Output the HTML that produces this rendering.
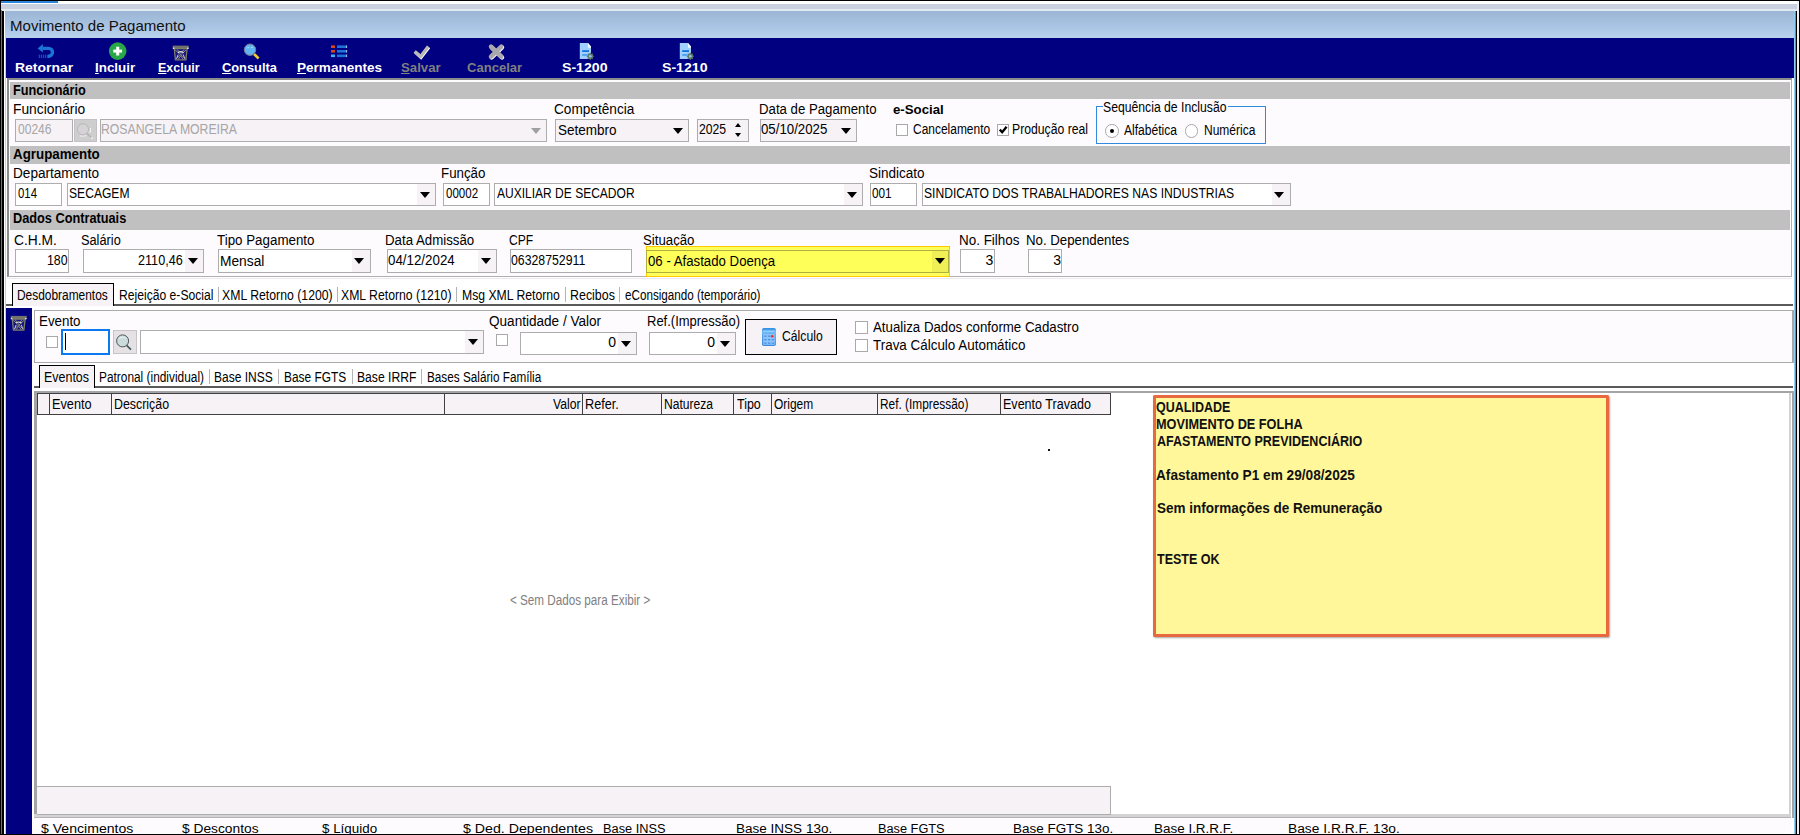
<!DOCTYPE html>
<html lang="pt-BR"><head><meta charset="utf-8"><title>Movimento de Pagamento</title>
<style>
html,body{margin:0;padding:0;background:#fff;}
#w{position:relative;width:1800px;height:835px;overflow:hidden;font-family:"Liberation Sans",sans-serif;color:#000;}
#w div,#w span,#w svg{position:absolute;}
.t{line-height:1;white-space:pre;transform-origin:0 0;}
.t u{text-decoration:underline;text-underline-offset:1px;text-decoration-thickness:1px;}
</style></head><body><div id="w">
<div style="left:0px;top:0px;width:1800px;height:835px;background:#fff;"></div>
<div style="left:0px;top:1px;width:1800px;height:3px;background:#fff;"></div>
<div style="left:1px;top:1px;width:57px;height:2.4px;background:#2b86dc;"></div>
<div style="left:0px;top:4px;width:1800px;height:5px;background:#c9d1e1;"></div>
<div style="left:0px;top:9px;width:1800px;height:2px;background:#e3e9f1;"></div>
<div style="left:0px;top:0px;width:1800px;height:1px;background:#000;"></div>
<div style="left:4px;top:11px;width:1792px;height:27px;background:linear-gradient(#9cb5d4,#a8c3e3 55%,#b9d3ed);"></div>
<span class="t" style="left:9.80px;top:19px;font-size:14.2px;transform:scaleX(1.0605);color:#111;">Movimento de Pagamento</span>
<div style="left:6px;top:38px;width:1787.5px;height:40px;background:#000080;"></div>
<div style="left:0px;top:0px;width:1px;height:835px;background:#000;"></div>
<div style="left:1px;top:10px;width:1.3px;height:825px;background:#707070;"></div>
<div style="left:2.3px;top:11px;width:1.7px;height:824px;background:#000;"></div>
<div style="left:4px;top:11px;width:1.2px;height:824px;background:#fff;"></div>
<div style="left:5.2px;top:38px;width:1.2px;height:797px;background:#b8d0f0;"></div>
<div style="left:1793.5px;top:11px;width:2.5px;height:824px;background:linear-gradient(90deg,#c8e0f8,#38b4ee 60%,#1890d0);"></div>
<div style="left:1796px;top:11px;width:1.2px;height:824px;background:#000;"></div>
<div style="left:1797.2px;top:1px;width:1.8px;height:834px;background:#f0f0f4;"></div>
<div style="left:1799px;top:0px;width:1px;height:835px;background:#000;"></div>
<span class="t" style="left:14.69px;top:62px;font-size:12px;transform:scaleX(1.1634);font-weight:bold;color:#fff;">Retornar</span>
<span class="t" style="left:94.73px;top:62px;font-size:12px;transform:scaleX(1.1137);font-weight:bold;color:#fff;"><u>I</u>ncluir</span>
<span class="t" style="left:157.79px;top:62px;font-size:12px;transform:scaleX(1.0403);font-weight:bold;color:#fff;"><u>E</u>xcluir</span>
<span class="t" style="left:221.69px;top:62px;font-size:12px;transform:scaleX(1.0699);font-weight:bold;color:#fff;"><u>C</u>onsulta</span>
<span class="t" style="left:297.02px;top:62px;font-size:12px;transform:scaleX(1.1290);font-weight:bold;color:#fff;"><u>P</u>ermanentes</span>
<span class="t" style="left:400.70px;top:62px;font-size:12px;transform:scaleX(1.0987);font-weight:bold;color:#808080;"><u>S</u>alvar</span>
<span class="t" style="left:467.28px;top:62px;font-size:12px;transform:scaleX(1.0871);font-weight:bold;color:#808080;">Cancelar</span>
<span class="t" style="left:562.18px;top:62px;font-size:12px;transform:scaleX(1.1754);font-weight:bold;color:#fff;">S-1200</span>
<span class="t" style="left:662.18px;top:62px;font-size:12px;transform:scaleX(1.1754);font-weight:bold;color:#fff;">S-1210</span>
<div style="left:6.7px;top:78px;width:1784.9px;height:199.4px;background:#fefbfe;border-style:solid;border-color:#8c8c8c #b2aeb2 #b2aeb2 #8c8c8c;border-width:2px 1px 1px 2px;box-sizing:border-box;"></div>
<div style="left:7px;top:277.6px;width:1784.6px;height:1px;background:#ece9ec;"></div>
<div style="left:10px;top:82.2px;width:1780.4px;height:17px;background:#c0c0c0;"></div>
<div style="left:10px;top:146.1px;width:1780.4px;height:17.6px;background:#c0c0c0;"></div>
<div style="left:10px;top:210.1px;width:1780.4px;height:19.6px;background:#c0c0c0;"></div>
<span class="t" style="left:12.77px;top:83px;font-size:14px;transform:scaleX(0.9083);font-weight:bold;">Funcionário</span>
<span class="t" style="left:13.27px;top:147px;font-size:14px;transform:scaleX(0.9535);font-weight:bold;">Agrupamento</span>
<span class="t" style="left:12.77px;top:211px;font-size:14px;transform:scaleX(0.9098);font-weight:bold;">Dados Contratuais</span>
<span class="t" style="left:13.40px;top:102px;font-size:14px;transform:scaleX(0.9864);">Funcionário</span>
<span class="t" style="left:554.12px;top:102px;font-size:14px;transform:scaleX(0.9737);">Competência</span>
<span class="t" style="left:758.54px;top:102px;font-size:14px;transform:scaleX(0.9434);">Data de Pagamento</span>
<span class="t" style="left:893.07px;top:103px;font-size:13.5px;transform:scaleX(0.9808);font-weight:bold;">e-Social</span>
<span class="t" style="left:13.41px;top:166px;font-size:14px;transform:scaleX(0.9712);">Departamento</span>
<span class="t" style="left:441.13px;top:166px;font-size:14px;transform:scaleX(0.9509);">Função</span>
<span class="t" style="left:868.89px;top:166px;font-size:14px;transform:scaleX(0.9660);">Sindicato</span>
<span class="t" style="left:13.81px;top:233px;font-size:14px;transform:scaleX(0.9836);">C.H.M.</span>
<span class="t" style="left:81.33px;top:233px;font-size:14px;transform:scaleX(0.9115);">Salário</span>
<span class="t" style="left:217.03px;top:233px;font-size:14px;transform:scaleX(0.9540);">Tipo Pagamento</span>
<span class="t" style="left:384.84px;top:233px;font-size:14px;transform:scaleX(0.9473);">Data Admissão</span>
<span class="t" style="left:509.00px;top:233px;font-size:14px;transform:scaleX(0.8639);">CPF</span>
<span class="t" style="left:643.01px;top:233px;font-size:14px;transform:scaleX(0.9442);">Situação</span>
<span class="t" style="left:958.53px;top:233px;font-size:14px;transform:scaleX(0.9594);">No. Filhos</span>
<span class="t" style="left:1026.14px;top:233px;font-size:14px;transform:scaleX(0.9462);">No. Dependentes</span>
<div style="left:15px;top:119px;width:57.5px;height:23px;background:#f6f2f6;border:1px solid #adadad;box-sizing:border-box;"></div>
<span class="t" style="left:17.52px;top:122px;font-size:14px;transform:scaleX(0.8598);color:#a6a6a6;">00246</span>
<div style="left:74.2px;top:119px;width:22.8px;height:22.8px;background:#cecece;border:1px solid #c2c0c2;box-sizing:border-box;"></div>
<div style="left:99.5px;top:119px;width:447.5px;height:23px;background:#f6f2f6;border:1px solid #adadad;box-sizing:border-box;"></div>
<div style="left:531px;top:127.8px;width:0;height:0;border-left:5.5px solid transparent;border-right:5.5px solid transparent;border-top:6px solid #a0a0a0;"></div>
<span class="t" style="left:101.02px;top:122px;font-size:14px;transform:scaleX(0.8742);color:#a6a6a6;">ROSANGELA MOREIRA</span>
<div style="left:555px;top:119px;width:134px;height:23px;background:#f6f2f6;border:1px solid #adadad;box-sizing:border-box;"></div>
<div style="left:672.9px;top:127.8px;width:0;height:0;border-left:5.5px solid transparent;border-right:5.5px solid transparent;border-top:6px solid #000;"></div>
<span class="t" style="left:558.19px;top:123px;font-size:14px;transform:scaleX(0.9649);">Setembro</span>
<div style="left:697px;top:119px;width:52px;height:23px;background:#f6f2f6;border:1px solid #adadad;box-sizing:border-box;"></div>
<span class="t" style="left:699.39px;top:122px;font-size:14px;transform:scaleX(0.8711);">2025</span>
<div style="left:734.5px;top:123.2px;width:0;height:0;border-left:3.5px solid transparent;border-right:3.5px solid transparent;border-bottom:4px solid #000;"></div>
<div style="left:734.5px;top:132.6px;width:0;height:0;border-left:3.5px solid transparent;border-right:3.5px solid transparent;border-top:4px solid #000;"></div>
<div style="left:760px;top:119px;width:97px;height:23px;background:#f6f2f6;border:1px solid #adadad;box-sizing:border-box;"></div>
<div style="left:840.5px;top:127.8px;width:0;height:0;border-left:5.5px solid transparent;border-right:5.5px solid transparent;border-top:6px solid #000;"></div>
<span class="t" style="left:761.17px;top:122px;font-size:14px;transform:scaleX(0.9471);">05/10/2025</span>
<div style="left:896px;top:123.6px;width:12.2px;height:12px;background:#fff;border:1px solid #a9a9a9;box-sizing:border-box;"></div>
<div style="left:997px;top:123.6px;width:12.4px;height:12px;background:#fff;border:1px solid #a9a9a9;box-sizing:border-box;"></div>
<svg style="left:997px;top:123.6px" width="12.399999999999977" height="12.0" viewBox="0 0 12 12"><path d="M2.6 5.6 L5 8.2 L9.4 2.8" fill="none" stroke="#000" stroke-width="2.3"/></svg>
<span class="t" style="left:913.00px;top:122px;font-size:14px;transform:scaleX(0.8542);">Cancelamento</span>
<span class="t" style="left:1012.42px;top:122px;font-size:14px;transform:scaleX(0.8729);">Produção real</span>
<div style="left:1096px;top:106.4px;width:170px;height:37.8px;border:1.4px solid #3289de;box-sizing:border-box;"></div>
<div style="left:1103.4px;top:104px;width:124.2px;height:5px;background:#fefbfe;"></div>
<span class="t" style="left:1103.05px;top:100px;font-size:14px;transform:scaleX(0.8719);">Sequência de Inclusão</span>
<div style="left:1105.1px;top:124.4px;width:13.6px;height:13.6px;background:#fff;border:1px solid #a8a8a8;border-radius:50%;box-sizing:border-box;"></div>
<div style="left:1109.7px;top:129px;width:4.4px;height:4.4px;background:#000;border-radius:50%;"></div>
<div style="left:1184.9px;top:124.4px;width:13.6px;height:13.6px;background:#fff;border:1px solid #a8a8a8;border-radius:50%;box-sizing:border-box;"></div>
<span class="t" style="left:1124.00px;top:123px;font-size:14px;transform:scaleX(0.8623);">Alfabética</span>
<span class="t" style="left:1203.64px;top:123px;font-size:14px;transform:scaleX(0.8571);">Numérica</span>
<div style="left:15px;top:183px;width:47px;height:23.4px;background:#fff;border:1px solid #adadad;box-sizing:border-box;"></div>
<span class="t" style="left:17.54px;top:186px;font-size:14px;transform:scaleX(0.8128);">014</span>
<div style="left:67px;top:183px;width:368.5px;height:23.4px;background:#fff;border:1px solid #adadad;box-sizing:border-box;"></div>
<div style="left:416.5px;top:184px;width:18px;height:21.4px;background:#f6f2f6;"></div>
<div style="left:419.5px;top:192px;width:0;height:0;border-left:5.5px solid transparent;border-right:5.5px solid transparent;border-top:6px solid #000;"></div>
<span class="t" style="left:68.96px;top:186px;font-size:14px;transform:scaleX(0.8645);">SECAGEM</span>
<div style="left:443px;top:183px;width:47px;height:23.4px;background:#fff;border:1px solid #adadad;box-sizing:border-box;"></div>
<span class="t" style="left:445.54px;top:186px;font-size:14px;transform:scaleX(0.8240);">00002</span>
<div style="left:494px;top:183px;width:369px;height:23.4px;background:#fff;border:1px solid #adadad;box-sizing:border-box;"></div>
<div style="left:844px;top:184px;width:18px;height:21.4px;background:#f6f2f6;"></div>
<div style="left:847.2px;top:192px;width:0;height:0;border-left:5.5px solid transparent;border-right:5.5px solid transparent;border-top:6px solid #000;"></div>
<span class="t" style="left:497.00px;top:186px;font-size:14px;transform:scaleX(0.8584);">AUXILIAR DE SECADOR</span>
<div style="left:870.3px;top:183px;width:46.7px;height:23.4px;background:#fff;border:1px solid #adadad;box-sizing:border-box;"></div>
<span class="t" style="left:872.03px;top:186px;font-size:14px;transform:scaleX(0.8420);">001</span>
<div style="left:922px;top:183px;width:369px;height:23.4px;background:#fff;border:1px solid #adadad;box-sizing:border-box;"></div>
<div style="left:1272px;top:184px;width:18px;height:21.4px;background:#f6f2f6;"></div>
<div style="left:1274.3px;top:192px;width:0;height:0;border-left:5.5px solid transparent;border-right:5.5px solid transparent;border-top:6px solid #000;"></div>
<span class="t" style="left:923.95px;top:186px;font-size:14px;transform:scaleX(0.8666);">SINDICATO DOS TRABALHADORES NAS INDUSTRIAS</span>
<div style="left:15px;top:249px;width:54px;height:24px;background:#fff;border:1px solid #adadad;box-sizing:border-box;"></div>
<span class="t" style="left:46.87px;top:253px;font-size:14px;transform:scaleX(0.8819);">180</span>
<div style="left:83px;top:249px;width:121px;height:24px;background:#fff;border:1px solid #adadad;box-sizing:border-box;"></div>
<div style="left:185px;top:250px;width:18px;height:22px;background:#f6f2f6;"></div>
<div style="left:188.3px;top:258.3px;width:0;height:0;border-left:5.5px solid transparent;border-right:5.5px solid transparent;border-top:6px solid #000;"></div>
<span class="t" style="left:137.97px;top:253px;font-size:14px;transform:scaleX(0.9027);">2110,46</span>
<div style="left:218px;top:249px;width:153px;height:24px;background:#fff;border:1px solid #adadad;box-sizing:border-box;"></div>
<div style="left:352px;top:250px;width:18px;height:22px;background:#f6f2f6;"></div>
<div style="left:354.2px;top:258.3px;width:0;height:0;border-left:5.5px solid transparent;border-right:5.5px solid transparent;border-top:6px solid #000;"></div>
<span class="t" style="left:220.40px;top:254px;font-size:14px;transform:scaleX(0.9826);">Mensal</span>
<div style="left:386.6px;top:249px;width:110.4px;height:24px;background:#fff;border:1px solid #adadad;box-sizing:border-box;"></div>
<div style="left:478px;top:250px;width:18px;height:22px;background:#f6f2f6;"></div>
<div style="left:480.5px;top:258.3px;width:0;height:0;border-left:5.5px solid transparent;border-right:5.5px solid transparent;border-top:6px solid #000;"></div>
<span class="t" style="left:388.27px;top:253px;font-size:14px;transform:scaleX(0.9526);">04/12/2024</span>
<div style="left:510.4px;top:249px;width:121.6px;height:24px;background:#fff;border:1px solid #adadad;box-sizing:border-box;"></div>
<span class="t" style="left:511.31px;top:253px;font-size:14px;transform:scaleX(0.8773);">06328752911</span>
<div style="left:646.2px;top:246px;width:304.1px;height:30.6px;background:#ffff5a;border:solid #ffc800;border-width:1.8px 1.6px 1.8px 1px;box-sizing:border-box;"></div>
<div style="left:645.6px;top:249.5px;width:303px;height:23.4px;border:1px solid #b0b040;box-sizing:border-box;"></div>
<div style="left:932.4px;top:250.5px;width:15.2px;height:21.4px;background:#f0f056;"></div>
<div style="left:934.8px;top:258.2px;width:0;height:0;border-left:5.5px solid transparent;border-right:5.5px solid transparent;border-top:6px solid #000;"></div>
<span class="t" style="left:648.07px;top:254px;font-size:14px;transform:scaleX(0.9445);">06 - Afastado Doença</span>
<div style="left:960px;top:249px;width:35px;height:24px;background:#fff;border:1px solid #adadad;box-sizing:border-box;"></div>
<span class="t" style="left:985.44px;top:253px;font-size:14px;transform:scaleX(1.0000);">3</span>
<div style="left:1027.6px;top:249px;width:34.9px;height:24px;background:#fff;border:1px solid #adadad;box-sizing:border-box;"></div>
<span class="t" style="left:1053.24px;top:253px;font-size:14px;transform:scaleX(1.0000);">3</span>
<div style="left:6.4px;top:304.2px;width:1787.1px;height:1.8px;background:#5a5a5a;"></div>
<div style="left:12px;top:283px;width:102.2px;height:23.2px;background:#f6f2f6;border:1px solid #000;border-bottom:none;box-sizing:border-box;"></div>
<span class="t" style="left:17.05px;top:288px;font-size:14px;transform:scaleX(0.8514);">Desdobramentos</span>
<span class="t" style="left:118.53px;top:288px;font-size:14px;transform:scaleX(0.8672);">Rejeição e-Social</span>
<span class="t" style="left:222.29px;top:288px;font-size:14px;transform:scaleX(0.8762);">XML Retorno (1200)</span>
<span class="t" style="left:341.49px;top:288px;font-size:14px;transform:scaleX(0.8746);">XML Retorno (1210)</span>
<span class="t" style="left:461.62px;top:288px;font-size:14px;transform:scaleX(0.8716);">Msg XML Retorno</span>
<span class="t" style="left:569.51px;top:288px;font-size:14px;transform:scaleX(0.8878);">Recibos</span>
<span class="t" style="left:625.23px;top:288px;font-size:14px;transform:scaleX(0.8331);">eConsigando (temporário)</span>
<div style="left:217.9px;top:287px;width:1px;height:15px;background:#b4b4b4;"></div>
<div style="left:337.1px;top:287px;width:1px;height:15px;background:#b4b4b4;"></div>
<div style="left:456.2px;top:287px;width:1px;height:15px;background:#b4b4b4;"></div>
<div style="left:564.5px;top:287px;width:1px;height:15px;background:#b4b4b4;"></div>
<div style="left:619.3px;top:287px;width:1px;height:15px;background:#b4b4b4;"></div>
<div style="left:6.4px;top:308px;width:25.6px;height:526px;background:#000080;"></div>
<div style="left:34.4px;top:310px;width:1759.2px;height:53px;background:#fefbfe;border:1px solid #aaa;border-right:2.5px solid #a8a8ac;box-sizing:border-box;"></div>
<span class="t" style="left:39.23px;top:314px;font-size:14px;transform:scaleX(0.9532);">Evento</span>
<span class="t" style="left:488.99px;top:314px;font-size:14px;transform:scaleX(0.9686);">Quantidade / Valor</span>
<span class="t" style="left:646.96px;top:314px;font-size:14px;transform:scaleX(0.9273);">Ref.(Impressão)</span>
<div style="left:45.6px;top:336px;width:12.6px;height:12.4px;background:#fff;border:1px solid #a9a9a9;box-sizing:border-box;"></div>
<div style="left:61.1px;top:329.1px;width:48.7px;height:25.8px;background:#fff;border:2.2px solid #0b7af2;box-sizing:border-box;"></div>
<div style="left:65px;top:332.8px;width:1px;height:16.8px;background:#000;"></div>
<div style="left:113px;top:330.2px;width:23.7px;height:23.6px;background:#e5e1e5;border:1px solid #c6c4c6;box-sizing:border-box;"></div>
<div style="left:140px;top:330.4px;width:344px;height:23.4px;background:#fff;border:1px solid #adadad;box-sizing:border-box;"></div>
<div style="left:465px;top:331.4px;width:18px;height:21.4px;background:#f6f2f6;"></div>
<div style="left:468.4px;top:339.4px;width:0;height:0;border-left:5.5px solid transparent;border-right:5.5px solid transparent;border-top:6px solid #000;"></div>
<div style="left:495.7px;top:334.2px;width:12.3px;height:11.8px;background:#fff;border:1px solid #a9a9a9;box-sizing:border-box;"></div>
<div style="left:519.5px;top:332px;width:117.5px;height:22.6px;background:#fff;border:1px solid #adadad;box-sizing:border-box;"></div>
<div style="left:618px;top:333px;width:18px;height:20.6px;background:#f6f2f6;"></div>
<div style="left:621.3px;top:340.6px;width:0;height:0;border-left:5.5px solid transparent;border-right:5.5px solid transparent;border-top:6px solid #000;"></div>
<span class="t" style="left:608.24px;top:335px;font-size:14px;transform:scaleX(1.0000);">0</span>
<div style="left:648.6px;top:332px;width:87.2px;height:22.6px;background:#fff;border:1px solid #adadad;box-sizing:border-box;"></div>
<div style="left:716.8px;top:333px;width:18px;height:20.6px;background:#f6f2f6;"></div>
<div style="left:720.1px;top:340.6px;width:0;height:0;border-left:5.5px solid transparent;border-right:5.5px solid transparent;border-top:6px solid #000;"></div>
<span class="t" style="left:707.24px;top:335px;font-size:14px;transform:scaleX(1.0000);">0</span>
<div style="left:745.4px;top:319.3px;width:91.2px;height:35.9px;background:#f6f2f6;border:1px solid #000;box-sizing:border-box;"></div>
<span class="t" style="left:781.79px;top:329px;font-size:14px;transform:scaleX(0.8720);">Cálculo</span>
<div style="left:855.4px;top:321.3px;width:12.6px;height:12.5px;background:#fff;border:1px solid #a9a9a9;box-sizing:border-box;"></div>
<div style="left:855.4px;top:339.4px;width:12.6px;height:12.5px;background:#fff;border:1px solid #a9a9a9;box-sizing:border-box;"></div>
<span class="t" style="left:872.70px;top:320px;font-size:14px;transform:scaleX(0.9478);">Atualiza Dados conforme Cadastro</span>
<span class="t" style="left:873.13px;top:338px;font-size:14px;transform:scaleX(0.9587);">Trava Cálculo Automático</span>
<div style="left:33.6px;top:386.4px;width:1759.9px;height:1.6px;background:#5a5a5a;"></div>
<div style="left:39.4px;top:365.4px;width:55.9px;height:22.6px;background:#f6f2f6;border:1px solid #000;border-bottom:none;box-sizing:border-box;"></div>
<span class="t" style="left:44.00px;top:370px;font-size:14px;transform:scaleX(0.8898);">Eventos</span>
<span class="t" style="left:99.25px;top:370px;font-size:14px;transform:scaleX(0.8486);">Patronal (individual)</span>
<span class="t" style="left:213.84px;top:370px;font-size:14px;transform:scaleX(0.8574);">Base INSS</span>
<span class="t" style="left:283.85px;top:370px;font-size:14px;transform:scaleX(0.8510);">Base FGTS</span>
<span class="t" style="left:356.63px;top:370px;font-size:14px;transform:scaleX(0.8685);">Base IRRF</span>
<span class="t" style="left:426.76px;top:370px;font-size:14px;transform:scaleX(0.8391);">Bases Salário Família</span>
<div style="left:208.9px;top:369px;width:1px;height:15px;background:#b4b4b4;"></div>
<div style="left:278.3px;top:369px;width:1px;height:15px;background:#b4b4b4;"></div>
<div style="left:351.7px;top:369px;width:1px;height:15px;background:#b4b4b4;"></div>
<div style="left:421.3px;top:369px;width:1px;height:15px;background:#b4b4b4;"></div>
<div style="left:34.4px;top:391.1px;width:1759.2px;height:426.9px;background:#fff;border:solid #a4a4a8;border-width:2px 2.2px 0 3px;box-sizing:border-box;"></div>
<div style="left:1789.2px;top:393px;width:2.2px;height:423px;background:#d2d2d2;"></div>
<div style="left:34.4px;top:814px;width:1757px;height:2.6px;background:#d4d4d4;"></div>
<div style="left:34.4px;top:816.6px;width:1757px;height:1.2px;background:#b4b4b4;"></div>
<div style="left:37.2px;top:393px;width:1074px;height:22px;background:#f6f2f6;border:1.4px solid #404040;box-sizing:border-box;"></div>
<div style="left:48.8px;top:393.4px;width:1.4px;height:21.2px;background:#404040;"></div>
<div style="left:110.5px;top:393.4px;width:1.4px;height:21.2px;background:#404040;"></div>
<div style="left:443.8px;top:393.4px;width:1.4px;height:21.2px;background:#404040;"></div>
<div style="left:581.6px;top:393.4px;width:1.4px;height:21.2px;background:#404040;"></div>
<div style="left:660.8px;top:393.4px;width:1.4px;height:21.2px;background:#404040;"></div>
<div style="left:733px;top:393.4px;width:1.4px;height:21.2px;background:#404040;"></div>
<div style="left:771px;top:393.4px;width:1.4px;height:21.2px;background:#404040;"></div>
<div style="left:876.5px;top:393.4px;width:1.4px;height:21.2px;background:#404040;"></div>
<div style="left:999.5px;top:393.4px;width:1.4px;height:21.2px;background:#404040;"></div>
<span class="t" style="left:51.88px;top:397px;font-size:14px;transform:scaleX(0.9102);">Evento</span>
<span class="t" style="left:114.01px;top:397px;font-size:14px;transform:scaleX(0.8852);">Descrição</span>
<span class="t" style="left:552.94px;top:397px;font-size:14px;transform:scaleX(0.8725);">Valor</span>
<span class="t" style="left:584.99px;top:397px;font-size:14px;transform:scaleX(0.9047);">Refer.</span>
<span class="t" style="left:663.93px;top:397px;font-size:14px;transform:scaleX(0.8643);">Natureza</span>
<span class="t" style="left:737.25px;top:397px;font-size:14px;transform:scaleX(0.8904);">Tipo</span>
<span class="t" style="left:774.06px;top:397px;font-size:14px;transform:scaleX(0.8522);">Origem</span>
<span class="t" style="left:879.85px;top:397px;font-size:14px;transform:scaleX(0.8478);">Ref. (Impressão)</span>
<span class="t" style="left:1002.60px;top:397px;font-size:14px;transform:scaleX(0.8964);">Evento Travado</span>
<span class="t" style="left:510.32px;top:593px;font-size:14px;transform:scaleX(0.8346);color:#808080;">&lt; Sem Dados para Exibir &gt;</span>
<div style="left:1048px;top:449px;width:2px;height:2px;background:#111;"></div>
<div style="left:37.4px;top:786px;width:1073.6px;height:29px;background:#f6f2f6;border:solid #adadad;border-width:1.2px 1.2px 1.8px 0;box-sizing:border-box;"></div>
<div style="left:32px;top:818px;width:1759.4px;height:16px;background:#fefbfe;"></div>
<span class="t" style="left:41.36px;top:822px;font-size:13.7px;transform:scaleX(1.0285);">$ Vencimentos</span>
<span class="t" style="left:182.36px;top:822px;font-size:13.7px;transform:scaleX(1.0059);">$ Descontos</span>
<span class="t" style="left:322.37px;top:822px;font-size:13.7px;transform:scaleX(0.9786);">$ Líquido</span>
<span class="t" style="left:462.86px;top:822px;font-size:13.7px;transform:scaleX(1.0353);">$ Ded. Dependentes</span>
<span class="t" style="left:602.98px;top:822px;font-size:13.7px;transform:scaleX(0.9344);">Base INSS</span>
<span class="t" style="left:736.42px;top:822px;font-size:13.7px;transform:scaleX(0.9880);">Base INSS 13o.</span>
<span class="t" style="left:877.98px;top:822px;font-size:13.7px;transform:scaleX(0.9312);">Base FGTS</span>
<span class="t" style="left:1012.92px;top:822px;font-size:13.7px;transform:scaleX(0.9833);">Base FGTS 13o.</span>
<span class="t" style="left:1153.92px;top:822px;font-size:13.7px;transform:scaleX(0.9826);">Base I.R.R.F.</span>
<span class="t" style="left:1287.90px;top:822px;font-size:13.7px;transform:scaleX(1.0066);">Base I.R.R.F. 13o.</span>
<div style="left:0px;top:834px;width:1800px;height:1px;background:#000;"></div>
<div style="left:1153.4px;top:395.2px;width:455.6px;height:242.2px;background:#fff799;border:3.2px solid #e8693f;box-sizing:border-box;box-shadow:1px 1px 2px rgba(0,0,0,.35);border-radius:1.5px;"></div>
<span class="t" style="left:1155.50px;top:401px;font-size:13.9px;transform:scaleX(0.9004);font-weight:bold;color:#111;">QUALIDADE</span>
<span class="t" style="left:1156.17px;top:418px;font-size:13.9px;transform:scaleX(0.9146);font-weight:bold;color:#111;">MOVIMENTO DE FOLHA</span>
<span class="t" style="left:1156.69px;top:435px;font-size:13.9px;transform:scaleX(0.9000);font-weight:bold;color:#111;">AFASTAMENTO PREVIDENCIÁRIO</span>
<span class="t" style="left:1155.66px;top:469px;font-size:13.9px;transform:scaleX(0.9834);font-weight:bold;color:#111;">Afastamento P1 em 29/08/2025</span>
<span class="t" style="left:1156.99px;top:502px;font-size:13.9px;transform:scaleX(0.9730);font-weight:bold;color:#111;">Sem informações de Remuneração</span>
<span class="t" style="left:1156.87px;top:553px;font-size:13.9px;transform:scaleX(0.9014);font-weight:bold;color:#111;">TESTE OK</span>
<svg style="left:0;top:0" width="1800" height="835" viewBox="0 0 1800 835"><polygon points="37.6,48.4 42.9,44 42.9,52.6" fill="#1b74d6"/><path d="M42.5 48.4 H48.6 A3.9 3.9 0 0 1 48.6 56.2 H48" fill="none" stroke="#1b74d6" stroke-width="3.4"/><rect x="38.8" y="54.6" width="1" height="3.5" fill="#1a5ccc"/><rect x="40.8" y="54.6" width="1" height="3.5" fill="#1a5ccc"/><rect x="42.8" y="54.6" width="1" height="3.5" fill="#1a5ccc"/><rect x="44.8" y="54.6" width="1" height="3.5" fill="#1a5ccc"/><rect x="46.8" y="54.6" width="1" height="3.5" fill="#1a5ccc"/><circle cx="117.7" cy="51.1" r="8.8" fill="#27a745"/><rect x="113.3" y="49.6" width="8.8" height="3" fill="#fff"/><rect x="116.2" y="46.7" width="3" height="8.8" fill="#fff"/><g transform="translate(0,0)"><rect x="172.7" y="45.6" width="16" height="3.1" fill="#72726a"/><polygon points="174.3,48.7 187.1,48.7 185.9,59.8 175.4,59.8" fill="#15157c" stroke="#7e7e6c" stroke-width="1.3"/><path d="M175.2 50 L185.6 59 M186.2 50 L175.8 59 M177 49.5 L180.7 53 L184.4 49.5 M178 59.5 L180.7 56 L183.4 59.5" stroke="#8a8a7a" stroke-width="1" fill="none"/><path d="M177.8 52.8 Q180.7 50.6 183.6 52.8" stroke="#d8d8e4" stroke-width="1.2" fill="none"/><path d="M178.2 54.5 L176.6 58.6 M183.2 54.5 L184.8 58.6" stroke="#c8c8d8" stroke-width="1" fill="none"/><rect x="172.9" y="47.6" width="1.4" height="1.4" fill="#e8e8f0"/><rect x="187.1" y="47.6" width="1.4" height="1.4" fill="#e8e8f0"/></g><g transform="translate(-162,270.3)"><rect x="172.7" y="45.6" width="16" height="3.1" fill="#72726a"/><polygon points="174.3,48.7 187.1,48.7 185.9,59.8 175.4,59.8" fill="#15157c" stroke="#7e7e6c" stroke-width="1.3"/><path d="M175.2 50 L185.6 59 M186.2 50 L175.8 59 M177 49.5 L180.7 53 L184.4 49.5 M178 59.5 L180.7 56 L183.4 59.5" stroke="#8a8a7a" stroke-width="1" fill="none"/><path d="M177.8 52.8 Q180.7 50.6 183.6 52.8" stroke="#d8d8e4" stroke-width="1.2" fill="none"/><path d="M178.2 54.5 L176.6 58.6 M183.2 54.5 L184.8 58.6" stroke="#c8c8d8" stroke-width="1" fill="none"/><rect x="172.9" y="47.6" width="1.4" height="1.4" fill="#e8e8f0"/><rect x="187.1" y="47.6" width="1.4" height="1.4" fill="#e8e8f0"/></g><line x1="254" y1="54" x2="258.6" y2="58.4" stroke="#f0c832" stroke-width="2.7"/><circle cx="250" cy="49.7" r="5.7" fill="#62b3f3" stroke="#7c7c90" stroke-width="1"/><path d="M247.2 47.6 h2 M251 47.6 h2" stroke="#a8d8fa" stroke-width="1"/><rect x="331" y="45.4" width="4" height="2.6" fill="#d8431f"/><rect x="337" y="45.4" width="9.2" height="2.6" fill="#1a74d6"/><rect x="346.2" y="45.4" width="0.9" height="2.6" fill="#c4daf4"/><rect x="331" y="50" width="4" height="2.6" fill="#d8431f"/><rect x="337" y="50" width="9.2" height="2.6" fill="#1a74d6"/><rect x="346.2" y="50" width="0.9" height="2.6" fill="#c4daf4"/><rect x="331" y="54.5" width="4" height="2.6" fill="#40b2f2"/><rect x="337" y="54.5" width="9.2" height="2.6" fill="#1a74d6"/><rect x="346.2" y="54.5" width="0.9" height="2.6" fill="#c4daf4"/><polyline points="415.2,52 421,57.3 428.9,47.3" fill="none" stroke="#fff" stroke-width="3.2"/><polyline points="414.6,51.4 420.6,56.4 428.2,46.6" fill="none" stroke="#b9b9b9" stroke-width="3.2"/><path d="M491.6 47.3 L502 57.4 M502 47.3 L491.6 57.4" stroke="#fff" stroke-width="4.4" stroke-linecap="round"/><path d="M491 46.6 L501.3 56.6 M501.3 46.6 L491 56.6" stroke="#aaa8aa" stroke-width="4.4" stroke-linecap="round"/><g transform="translate(0,0)"><path d="M579.8 43 H588 L591 46.4 V59 H579.8 Z" fill="#9fd0ff"/><path d="M588 43 L591 46.4 V47.8 H588 Z" fill="#f4faff"/><rect x="582.2" y="50.2" width="6.8" height="1.8" fill="#1272da"/><rect x="582.2" y="54.2" width="5" height="1.5" fill="#3a96ea"/><polygon points="594.20,56.30 592.79,57.33 593.06,59.06 591.33,58.79 590.30,60.20 589.27,58.79 587.54,59.06 587.81,57.33 586.40,56.30 587.81,55.27 587.54,53.54 589.27,53.81 590.30,52.40 591.33,53.81 593.06,53.54 592.79,55.27" fill="#5f7a6a"/><circle cx="590.3" cy="56.3" r="1.3" fill="#8fc4f0"/></g><g transform="translate(100,0)"><path d="M579.8 43 H588 L591 46.4 V59 H579.8 Z" fill="#9fd0ff"/><path d="M588 43 L591 46.4 V47.8 H588 Z" fill="#f4faff"/><rect x="582.2" y="50.2" width="6.8" height="1.8" fill="#1272da"/><rect x="582.2" y="54.2" width="5" height="1.5" fill="#3a96ea"/><polygon points="594.20,56.30 592.79,57.33 593.06,59.06 591.33,58.79 590.30,60.20 589.27,58.79 587.54,59.06 587.81,57.33 586.40,56.30 587.81,55.27 587.54,53.54 589.27,53.81 590.30,52.40 591.33,53.81 593.06,53.54 592.79,55.27" fill="#5f7a6a"/><circle cx="590.3" cy="56.3" r="1.3" fill="#8fc4f0"/></g><line x1="126.6" y1="345.4" x2="131" y2="349.7" stroke="#3f5a5c" stroke-width="1.7"/><circle cx="122.6" cy="340.9" r="6" fill="#cbdadb" stroke="#4a5757" stroke-width="1"/><path d="M119.2 338.6 Q122.6 335.6 126 338.6" stroke="#e8f0f0" stroke-width="1.2" fill="none"/><path d="M80 136 h5.5 v-1.2 M88.8 132 l1.6 0 v-4" stroke="#f4f4f4" stroke-width="1" fill="none"/><line x1="87" y1="133.4" x2="91.4" y2="137.5" stroke="#b4b4b4" stroke-width="1.4"/><rect x="91.2" y="137.4" width="1.6" height="1.4" fill="#fafafa"/><circle cx="83" cy="129.3" r="5.6" fill="#d5d3d5" stroke="#b8b6b8" stroke-width="1"/><defs><linearGradient id="cg" x1="0" y1="0" x2="0" y2="1"><stop offset="0" stop-color="#2f8fe2"/><stop offset="0.28" stop-color="#74bdf8"/><stop offset="0.34" stop-color="#58a8f2"/><stop offset="1" stop-color="#3c86e0"/></linearGradient></defs><rect x="762" y="328" width="13.9" height="18.1" rx="1.8" fill="url(#cg)"/><rect x="763.2" y="330.6" width="11.5" height="1.2" fill="#a4d8ff"/><rect x="763.2" y="334" width="11.5" height="10.8" fill="#8cc4fa"/><rect x="764.2" y="335.5" width="2.4" height="1.3" fill="#4a8ee6"/><rect x="767.9000000000001" y="335.5" width="2.4" height="1.3" fill="#4a8ee6"/><circle cx="772.2" cy="336.2" r="1.3" fill="#ee2c2c"/><rect x="764.2" y="339.0" width="2.4" height="1.3" fill="#4a8ee6"/><rect x="767.9000000000001" y="339.0" width="2.4" height="1.3" fill="#4a8ee6"/><rect x="771.6" y="339.0" width="2.4" height="1.3" fill="#4a8ee6"/><rect x="764.2" y="342.5" width="2.4" height="1.3" fill="#4a8ee6"/><rect x="767.9000000000001" y="342.5" width="2.4" height="1.3" fill="#4a8ee6"/><rect x="771.6" y="342.5" width="2.4" height="1.3" fill="#4a8ee6"/></svg>
</div></body></html>
